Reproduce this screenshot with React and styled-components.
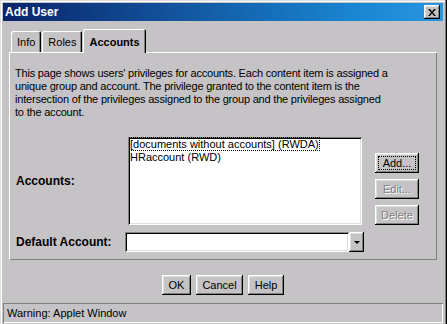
import styled, { createGlobalStyle } from "styled-components";

const GlobalStyle = createGlobalStyle`
  body {
    margin: 0;
    font-family: "Liberation Sans", Arial, sans-serif;
  }
`;

function CloseIcon() {
  return (
    <svg width="8" height="7" viewBox="0 0 8 7">
      <path d="M0 0h2l2 2.5L6 0h2L5 3.5 8 7H6L4 4.5 2 7H0l3-3.5z" fill="#000" />
    </svg>
  );
}

function App() {
  return (
    <>
      <GlobalStyle />
      <Window>
        <TitleBar>
          <Title>Add User</Title>
          <CloseButton>
            <CloseIcon />
          </CloseButton>
        </TitleBar>

        <Content>
          <TabRow>
            <Tab>Info</Tab>
            <Tab>Roles</Tab>
            <Tab $active>Accounts</Tab>
          </TabRow>

          <Panel>
            <Description>
              <Line>This page shows users' privileges for accounts. Each content item is assigned a</Line>
              <Line>unique group and account. The privilege granted to the content item is the</Line>
              <Line>intersection of the privileges assigned to the group and the privileges assigned</Line>
              <Line>to the account.</Line>
            </Description>

            <Row>
              <Label $width="113px">Accounts:</Label>
              <ListBox>
                <ListItem>
                  <Focused>[documents without accounts] (RWDA)</Focused>
                </ListItem>
                <ListItem>HRaccount (RWD)</ListItem>
              </ListBox>
              <SideButtons>
                <Button $focus>Add...</Button>
                <Button disabled>Edit...</Button>
                <Button disabled>Delete</Button>
              </SideButtons>
            </Row>

            <ComboRow>
              <Label $width="110px">Default Account:</Label>
              <Combo>
                <ComboField />
                <ComboArrow>
                  <Arrow />
                </ComboArrow>
              </Combo>
            </ComboRow>
          </Panel>

          <DialogButtons>
            <Button $w="29px">OK</Button>
            <Button $w="47px">Cancel</Button>
            <Button $w="36px">Help</Button>
          </DialogButtons>
        </Content>

        <StatusBar>Warning: Applet Window</StatusBar>
      </Window>
    </>
  );
}

const raised = `
  box-shadow: inset -1px -1px #000, inset 1px 1px #fff,
    inset -2px -2px #808080, inset 2px 2px #dfdfdf;
`;

const sunken = `
  box-shadow: inset 1px 1px #808080, inset -1px -1px #fff,
    inset 2px 2px #000, inset -2px -2px #dfdfdf;
`;

const Window = styled.div`
  box-sizing: border-box;
  width: 447px;
  height: 324px;
  padding: 3px 4px 1px 3px;
  display: flex;
  flex-direction: column;
  background: #c6c3c6;
  box-shadow: inset -1px 0 #000, inset -2px 0 #808080, inset 1px 1px #dfdfdf,
    inset 2px 2px #fff;
  font-size: 11px;
  color: #000;
`;

const TitleBar = styled.div`
  height: 18px;
  display: flex;
  align-items: center;
  justify-content: space-between;
  padding: 0 3px 0 2px;
  background: linear-gradient(to right, #0a246a, #1a86d2 80%, #2a96e0);
`;

const Title = styled.span`
  color: #fff;
  font-weight: 700;
  font-size: 12px;
`;

const CloseButton = styled.div`
  width: 16px;
  height: 14px;
  display: flex;
  align-items: center;
  justify-content: center;
  background: #c6c3c6;
  ${raised}
`;

const Content = styled.div`
  flex: 1;
  padding: 8px 6px 0;
  display: flex;
  flex-direction: column;
`;

const TabRow = styled.div`
  display: flex;
  align-items: flex-end;
  padding-left: 2px;
  height: 23px;
`;

const Tab = styled.div`
  position: relative;
  box-sizing: border-box;
  height: ${(p) => (p.$active ? "24px" : "21px")};
  margin-bottom: ${(p) => (p.$active ? "-1px" : "0")};
  margin-left: 1px;
  padding: ${(p) => (p.$active ? "2px 6px 0" : "1px 6px 0")};
  display: flex;
  align-items: center;
  font-weight: ${(p) => (p.$active ? 700 : 400)};
  background: #c6c3c6;
  border-radius: 2px 2px 0 0;
  z-index: ${(p) => (p.$active ? 1 : 0)};
  box-shadow: inset 1px 1px #fff, inset -1px 0 #000, inset -2px 0 #808080;
  &:first-child {
    margin-left: 0;
  }
`;

const Panel = styled.div`
  box-sizing: border-box;
  height: 208px;
  padding: 15px 6px 8px;
  display: flex;
  flex-direction: column;
  box-shadow: inset 1px 1px #fff, inset -1px -1px #808080;
`;

const Description = styled.div`
  margin-bottom: 18px;
  letter-spacing: -0.2px;
`;

const Line = styled.div`
  line-height: 13px;
  white-space: nowrap;
`;

const Row = styled.div`
  display: flex;
  align-items: flex-start;
`;

const ComboRow = styled.div`
  display: flex;
  align-items: center;
  margin-top: 7px;
`;

const Label = styled.div`
  width: ${(p) => p.$width};
  padding-left: 1px;
  box-sizing: border-box;
  font-weight: 700;
  font-size: 12px;
  align-self: center;
`;

const ListBox = styled.div`
  box-sizing: border-box;
  width: 234px;
  height: 88px;
  padding: 1px 2px;
  background: #fff;
  ${sunken}
`;

const ListItem = styled.div`
  line-height: 13px;
  font-size: 11px;
  white-space: nowrap;
`;

const Focused = styled.span`
  outline: 1px dotted #000;
  outline-offset: 0;
`;

const SideButtons = styled.div`
  display: flex;
  flex-direction: column;
  gap: 6px;
  margin-left: 13px;
  padding-top: 16px;
`;

const Button = styled.button`
  box-sizing: border-box;
  width: ${(p) => p.$w || "44px"};
  height: 20px;
  padding: 0;
  border: none;
  background: #c6c3c6;
  font-family: "Liberation Sans", Arial, sans-serif;
  font-size: 11px;
  color: #000;
  ${raised}
  ${(p) =>
    p.$focus &&
    `
    outline: 1px dotted #000;
    outline-offset: -4px;
  `}
  &:disabled {
    color: #808080;
    text-shadow: 1px 1px #fff;
  }
`;

const Combo = styled.div`
  display: flex;
  width: 239px;
  height: 20px;
`;

const ComboField = styled.div`
  flex: 1;
  background: #fff;
  ${sunken}
`;

const ComboArrow = styled.div`
  width: 15px;
  display: flex;
  align-items: center;
  justify-content: center;
  background: #c6c3c6;
  ${raised}
`;

const Arrow = styled.div`
  width: 0;
  height: 0;
  border-left: 3px solid transparent;
  border-right: 3px solid transparent;
  border-top: 3px solid #000;
`;

const DialogButtons = styled.div`
  display: flex;
  justify-content: center;
  gap: 5px;
  margin-top: 15px;
`;

const StatusBar = styled.div`
  box-sizing: border-box;
  height: 20px;
  margin-top: 8px;
  padding-left: 4px;
  display: flex;
  align-items: center;
  box-shadow: inset 1px 1px #808080, inset -1px -1px #fff;
`;

export default App;
